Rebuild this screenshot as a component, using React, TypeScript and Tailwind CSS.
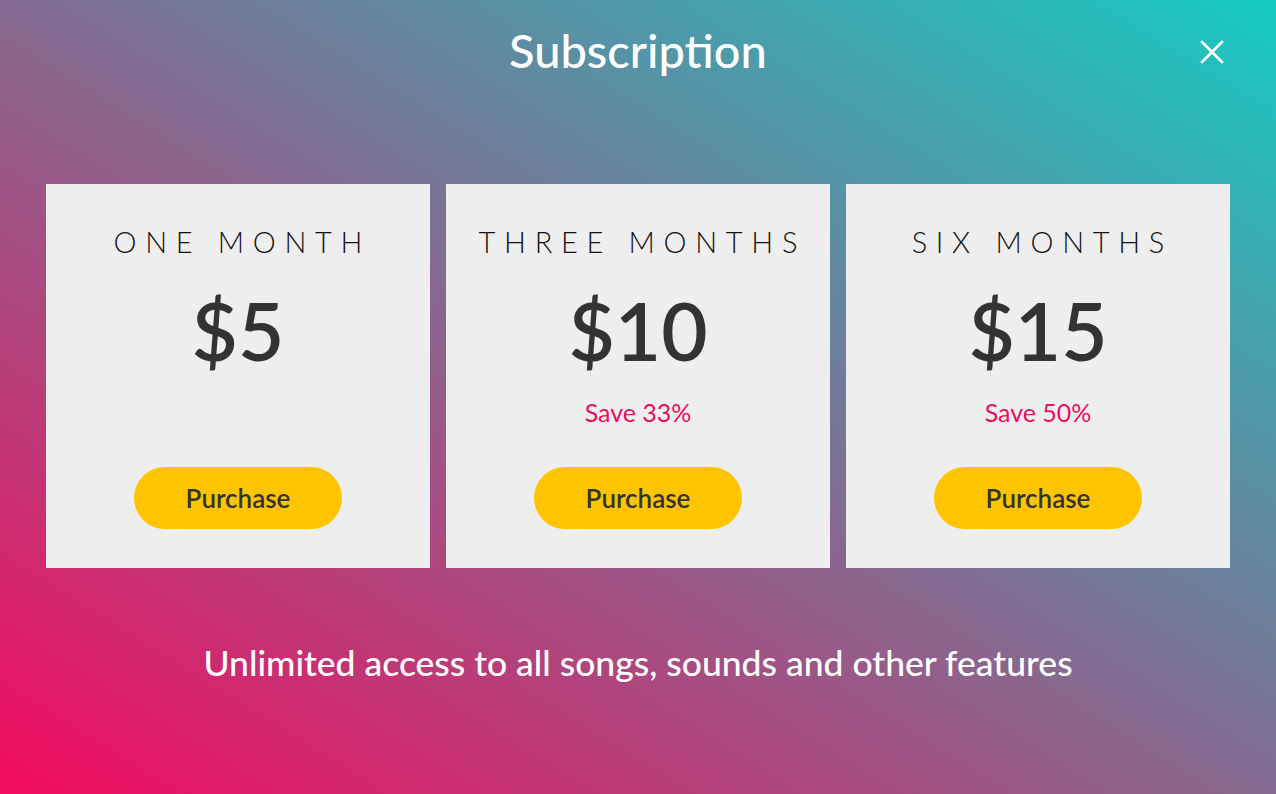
import { X } from "lucide-react";

const plans = [
  { title: "ONE MONTH", price: "$5", save: "" },
  { title: "THREE MONTHS", price: "$10", save: "Save 33%" },
  { title: "SIX MONTHS", price: "$15", save: "Save 50%" },
];

export default function App() {
  return (
    <div
      className="relative w-[1276px] h-[794px] overflow-hidden bg-[linear-gradient(to_top_right,#f40a5e,#15cbc3)] text-white flex flex-col items-center"
      style={{ fontFamily: "Lato, 'Open Sans', sans-serif" }}
    >
      <h1 className="mt-[22px] h-[56px] text-[47px] leading-[56px] font-medium">Subscription</h1>

      <button className="absolute top-[36px] right-[48px] w-[32px] h-[32px] text-white">
        <X className="w-[40px] h-[40px] -m-[4px]" strokeWidth={1.6} />
      </button>

      {/* Cards */}
      <div className="mt-[106px] flex gap-[16px]">
        {plans.map((plan) => (
          <div
            key={plan.title}
            className="w-[384px] h-[384px] bg-[#eeeeee] flex flex-col items-center text-[#333333]"
          >
            <div className="mt-[40px] h-[36px] text-[29px] leading-[36px] font-light tracking-[0.3em] pl-[0.3em] text-[#111111]">
              {plan.title}
            </div>
            <div className="mt-[22px] h-[96px] text-[80px] leading-[96px] font-semibold">{plan.price}</div>
            <div className="mt-[18px] h-[32px] text-[25px] leading-[32px] text-[#ec0e5d]">{plan.save}</div>
            <button className="mt-[39px] w-[208px] h-[62px] rounded-full bg-[#ffc400] text-[26px] font-semibold text-[#333333]">
              Purchase
            </button>
          </div>
        ))}
      </div>

      <p className="mt-[73px] text-[35.5px] leading-[44px] font-medium">
        Unlimited access to all songs, sounds and other features
      </p>
    </div>
  );
}
